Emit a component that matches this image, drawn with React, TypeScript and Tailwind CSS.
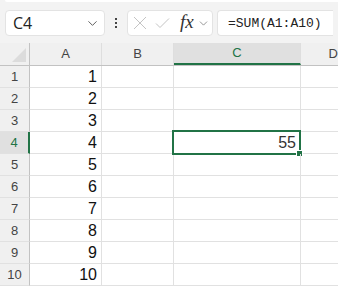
import { ChevronDown } from "lucide-react";

const COLS = ["A", "B", "C", "D"];
const COL_W = ["w-[72px]", "w-[72px]", "w-[127px]", "flex-1"];
const ROWS = [1, 2, 3, 4, 5, 6, 7, 8, 9, 10];

export default function App() {
  return (
    <div className="w-[338px] h-[286px] overflow-hidden bg-white font-['Open_Sans',sans-serif]">
      {/* Formula bar */}
      <div className="relative h-[43px] bg-[#f3f3f3] flex items-center px-[5px] pt-[3px]">
        <div className="absolute left-[5px] right-0 top-0 h-[2px] bg-white rounded-bl-[4px]" />
        <div className="w-[100px] h-[26px] bg-white rounded-[4px] border border-[#e3e3e3] flex items-center pl-[7px] pr-[4px]">
          <span className="text-[16px] text-[#222] flex-1 leading-none">C4</span>
          <ChevronDown className="w-[15px] h-[15px] text-[#555]" strokeWidth={1.5} />
        </div>
        <div className="w-[22px] flex flex-col items-center gap-[2px]">
          <span className="w-[2px] h-[2px] bg-[#444]" />
          <span className="w-[2px] h-[2px] bg-[#444]" />
          <span className="w-[2px] h-[2px] bg-[#444]" />
        </div>
        <div className="w-[86px] h-[26px] bg-white rounded-[4px] border border-[#e3e3e3] flex items-center pl-[5px]">
          <svg width="14" height="14" viewBox="0 0 14 14" className="text-[#c4c4c4]">
            <path d="M1 1L13 13M13 1L1 13" stroke="currentColor" strokeWidth="1" fill="none" />
          </svg>
          <svg width="15" height="12" viewBox="0 0 15 12" className="ml-[8px] text-[#c4c4c4]">
            <path d="M1 6.5L5 10.5L14 1.5" stroke="currentColor" strokeWidth="1" fill="none" />
          </svg>
          <span className="ml-[10px] text-[19px] italic text-[#333] font-['Liberation_Serif',serif] leading-none -mt-[3px]">fx</span>
          <ChevronDown className="w-[13px] h-[13px] text-[#777] ml-[3px]" strokeWidth={1.4} />
        </div>
        <div className="ml-[4px] flex-1 h-[26px] bg-white rounded-l-[4px] border border-r-0 border-[#e3e3e3] flex items-center pl-[10px]">
          <span className="text-[13px] text-[#222] font-['Liberation_Mono',monospace] leading-none">=SUM(A1:A10)</span>
        </div>
      </div>

      {/* Column headers */}
      <div className="flex h-[23px] bg-[#f0f0f0] border-b border-[#c2c2c2]">
        <div className="w-[30px] border-r border-[#c2c2c2] relative">
          <div className="absolute right-[3px] bottom-[3px] w-0 h-0 border-l-[14px] border-l-transparent border-b-[14px] border-b-[#dcdcdc]" />
        </div>
        {COLS.map((c, i) => (
          <div
            key={c}
            className={`${COL_W[i]} ${i < 3 ? "border-r border-[#dedede]" : ""} ${
              c === "C" ? "bg-[#e0e0e0] text-[#217346] border-b-2 border-b-[#217346]" : "text-[#444]"
            } flex items-center justify-center text-[13px] font-['Liberation_Sans',sans-serif]`}
          >
            {c === "D" ? <span className="ml-auto">D</span> : c}
          </div>
        ))}
      </div>

      {/* Rows */}
      {ROWS.map((r) => (
        <div key={r} className="flex h-[22px]">
          <div
            className={`w-[30px] border-b border-[#e1e1e1] flex items-center justify-center text-[13px] font-['Liberation_Sans',sans-serif] ${
              r === 4
                ? "bg-[#e0e0e0] text-[#217346] border-r-2 border-r-[#217346]"
                : "bg-[#f0f0f0] text-[#444] border-r border-r-[#c2c2c2]"
            }`}
          >
            {r}
          </div>
          <div className="w-[72px] border-r border-b border-[#e1e1e1] flex items-center justify-end pr-[4px] text-[16px] text-[#111] font-['Liberation_Sans',sans-serif]">
            {r}
          </div>
          <div className="w-[72px] border-r border-b border-[#e1e1e1]" />
          <div className="relative w-[127px] border-r border-b border-[#e1e1e1] flex items-center justify-end pr-[4px] text-[16px] text-[#333] font-['Liberation_Sans',sans-serif]">
            {r === 4 && (
              <>
                55
                <div className="absolute -left-[2px] -top-[2px] -right-[1px] -bottom-[2px] border-2 border-[#217346]" />
                <div className="absolute -right-[3px] -bottom-[4px] w-[7px] h-[7px] bg-[#217346] border border-white" />
              </>
            )}
          </div>
          <div className="flex-1 border-b border-[#e1e1e1]" />
        </div>
      ))}
    </div>
  );
}
